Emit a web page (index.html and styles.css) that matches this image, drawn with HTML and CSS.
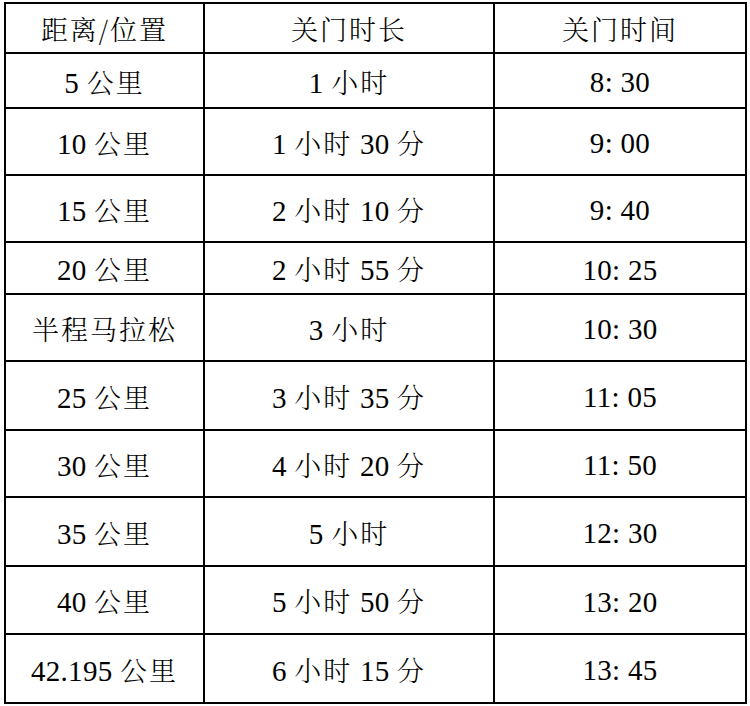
FILE: index.html
```html
<!DOCTYPE html>
<html>
<head>
<meta charset="utf-8">
<title>关门时间</title>
<link rel="stylesheet" href="styles.css">
</head>
<body>
<table class="cutoff">
  <colgroup>
    <col class="c1">
    <col class="c2">
    <col class="c3">
  </colgroup>
  <tr class="h50"><td><span class="zh">距离/位置</span></td><td><span class="zh">关门时长</span></td><td><span class="zh">关门时间</span></td></tr>
  <tr class="h55"><td>5 <span class="zh">公里</span></td><td>1 <span class="zh">小时</span></td><td>8: 30</td></tr>
  <tr class="h67"><td>10 <span class="zh">公里</span></td><td>1 <span class="zh">小时</span> 30 <span class="zh">分</span></td><td>9: 00</td></tr>
  <tr class="h67"><td>15 <span class="zh">公里</span></td><td>2 <span class="zh">小时</span> 10 <span class="zh">分</span></td><td>9: 40</td></tr>
  <tr class="h52"><td>20 <span class="zh">公里</span></td><td>2 <span class="zh">小时</span> 55 <span class="zh">分</span></td><td>10: 25</td></tr>
  <tr class="h67"><td><span class="zh">半程马拉松</span></td><td>3 <span class="zh">小时</span></td><td>10: 30</td></tr>
  <tr class="h69"><td>25 <span class="zh">公里</span></td><td>3 <span class="zh">小时</span> 35 <span class="zh">分</span></td><td>11: 05</td></tr>
  <tr class="h67"><td>30 <span class="zh">公里</span></td><td>4 <span class="zh">小时</span> 20 <span class="zh">分</span></td><td>11: 50</td></tr>
  <tr class="h69"><td>35 <span class="zh">公里</span></td><td>5 <span class="zh">小时</span></td><td>12: 30</td></tr>
  <tr class="h68"><td>40 <span class="zh">公里</span></td><td>5 <span class="zh">小时</span> 50 <span class="zh">分</span></td><td>13: 20</td></tr>
  <tr class="h69"><td>42.195 <span class="zh">公里</span></td><td>6 <span class="zh">小时</span> 15 <span class="zh">分</span></td><td>13: 45</td></tr>
</table>
</body>
</html>
```

FILE: styles.css
```css
html, body {
  margin: 0;
  padding: 0;
  background: #ffffff;
}

body {
  padding: 2px 0 0 4px;
}

.cutoff {
  border-collapse: collapse;
  table-layout: fixed;
  width: 743px;
  font-family: "Liberation Serif", "Times New Roman", serif;
  font-size: 29px;
  font-weight: 400;
  color: #000000;
  letter-spacing: 0.3px;
}

.zh {
  font-family: "Noto Serif CJK SC", "Noto Sans CJK SC", sans-serif;
  font-size: 27px;
  font-weight: 300;
  letter-spacing: 2px;
}

.c1 { width: 199px; }
.c2 { width: 290px; }
.c3 { width: 252px; }

.cutoff td {
  box-sizing: border-box;
  border: 2px solid #000000;
  padding: 4px 0 0 0;
  text-align: center;
  vertical-align: middle;
  white-space: nowrap;
  line-height: 1;
}

.h50 td { height: 50px; }
.h52 td { height: 52px; }
.h55 td { height: 55px; }
.h67 td { height: 67px; }
.h68 td { height: 68px; }
.h69 td { height: 69px; }
```
